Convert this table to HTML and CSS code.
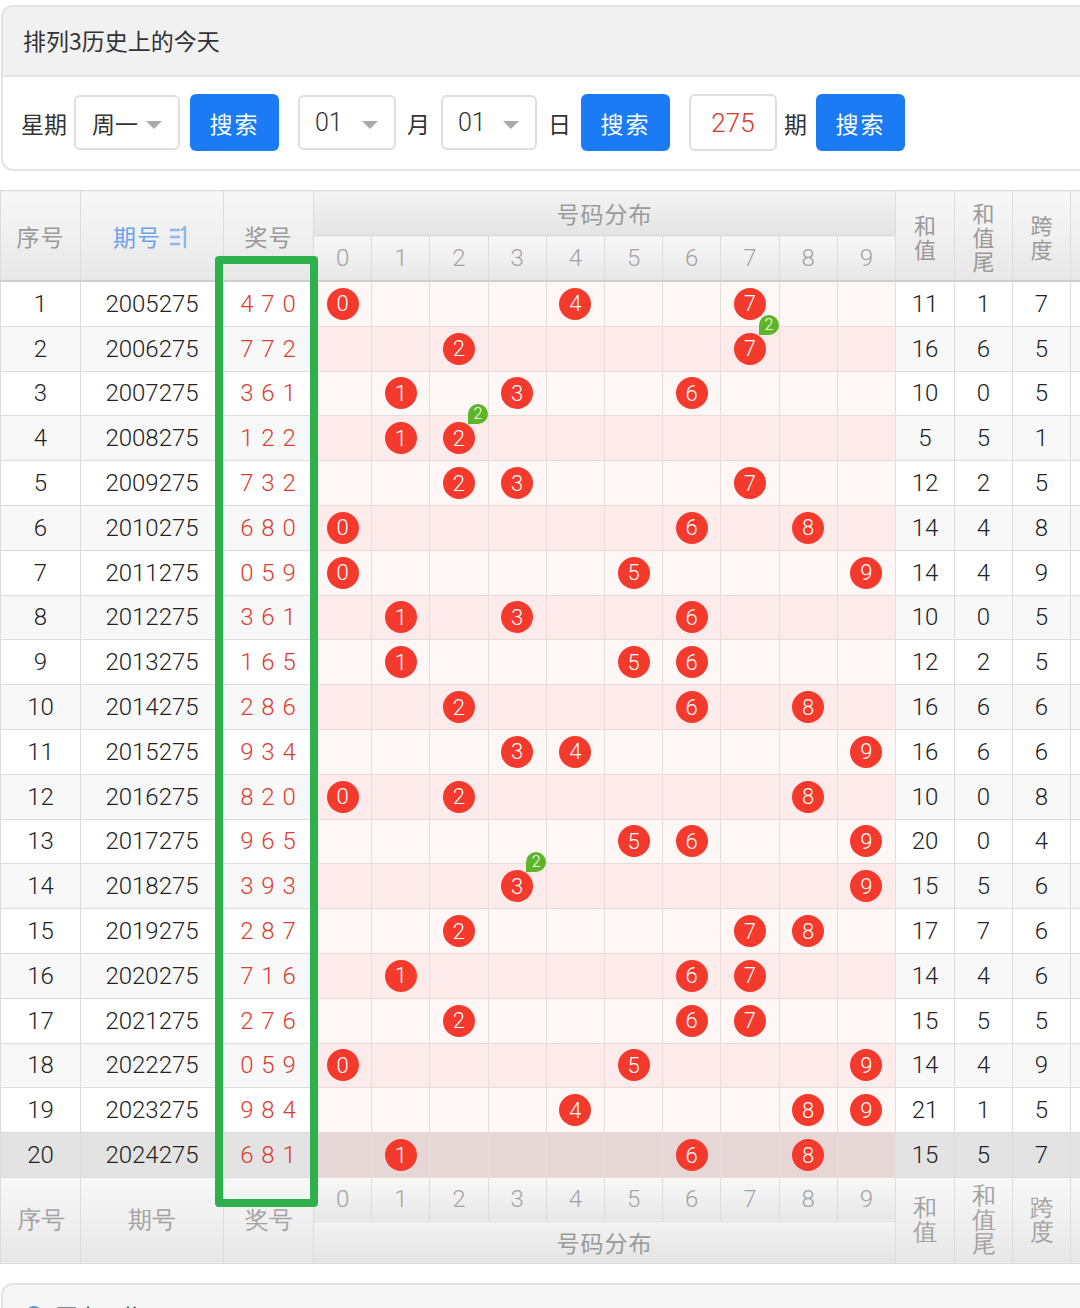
FILE: index.html
```html
<!DOCTYPE html>
<html lang="zh">
<head>
<meta charset="utf-8">
<title>排列3历史上的今天</title>
<link rel="stylesheet" href="styles.css">
</head>
<body>
<div class="page">
  <section class="card">
    <div class="card-head">排列3历史上的今天</div>
    <div class="card-body">
      <span class="lbl">星期</span>
      <span class="sel sel-week">周一<i class="caret"></i></span>
      <span class="btn">搜索</span>
      <span class="sel sel-num sel-month">01<i class="caret"></i></span>
      <span class="lbl lbl-mid">月</span>
      <span class="sel sel-num sel-day">01<i class="caret"></i></span>
      <span class="lbl lbl-mid lbl-end">日</span>
      <span class="btn">搜索</span>
      <span class="inp">275</span>
      <span class="lbl lbl-tight">期</span>
      <span class="btn btn-tight">搜索</span>
    </div>
  </section>

  <div class="table-wrap">
    <table class="trend">
      <colgroup>
        <col class="c-idx"><col class="c-issue"><col class="c-prize">
        <col class="c-d"><col class="c-d"><col class="c-d"><col class="c-d"><col class="c-d">
        <col class="c-d"><col class="c-d"><col class="c-d"><col class="c-d"><col class="c-d">
        <col class="c-sum"><col class="c-sum2"><col class="c-sum2"><col class="c-extra">
      </colgroup>
      <thead>
        <tr class="h1">
          <th rowspan="2">序号</th>
          <th rowspan="2" class="sortable">期号 <svg class="sort-ico" width="22" height="24" viewBox="0 0 22 24" aria-hidden="true"><path d="M1 5h10M1 12h10M1 19h10" stroke="#8cb8ef" stroke-width="2.4" fill="none"/><path d="M16 2v20M16 2l-3 3" stroke="#8cb8ef" stroke-width="2.4" fill="none" stroke-linecap="round"/></svg></th>
          <th rowspan="2">奖号</th>
          <th colspan="10" class="group">号码分布</th>
          <th rowspan="2" class="stack">和<br>值</th>
          <th rowspan="2" class="stack">和<br>值<br>尾</th>
          <th rowspan="2" class="stack">跨<br>度</th>
          <th rowspan="2"></th>
        </tr>
        <tr class="h2">
          <th>0</th><th>1</th><th>2</th><th>3</th><th>4</th><th>5</th><th>6</th><th>7</th><th>8</th><th>9</th>
        </tr>
      </thead>
      <tbody>
        <tr><td>1</td><td>2005275</td><td class="prize">4 7 0</td><td class="d"><span class="ball">0</span></td><td class="d"></td><td class="d"></td><td class="d"></td><td class="d"><span class="ball">4</span></td><td class="d"></td><td class="d"></td><td class="d"><span class="ball">7</span></td><td class="d"></td><td class="d"></td><td>11</td><td>1</td><td>7</td><td></td></tr>
        <tr><td>2</td><td>2006275</td><td class="prize">7 7 2</td><td class="d"></td><td class="d"></td><td class="d"><span class="ball">2</span></td><td class="d"></td><td class="d"></td><td class="d"></td><td class="d"></td><td class="d"><span class="ball">7<i class="badge">2</i></span></td><td class="d"></td><td class="d"></td><td>16</td><td>6</td><td>5</td><td></td></tr>
        <tr><td>3</td><td>2007275</td><td class="prize">3 6 1</td><td class="d"></td><td class="d"><span class="ball">1</span></td><td class="d"></td><td class="d"><span class="ball">3</span></td><td class="d"></td><td class="d"></td><td class="d"><span class="ball">6</span></td><td class="d"></td><td class="d"></td><td class="d"></td><td>10</td><td>0</td><td>5</td><td></td></tr>
        <tr><td>4</td><td>2008275</td><td class="prize">1 2 2</td><td class="d"></td><td class="d"><span class="ball">1</span></td><td class="d"><span class="ball">2<i class="badge">2</i></span></td><td class="d"></td><td class="d"></td><td class="d"></td><td class="d"></td><td class="d"></td><td class="d"></td><td class="d"></td><td>5</td><td>5</td><td>1</td><td></td></tr>
        <tr><td>5</td><td>2009275</td><td class="prize">7 3 2</td><td class="d"></td><td class="d"></td><td class="d"><span class="ball">2</span></td><td class="d"><span class="ball">3</span></td><td class="d"></td><td class="d"></td><td class="d"></td><td class="d"><span class="ball">7</span></td><td class="d"></td><td class="d"></td><td>12</td><td>2</td><td>5</td><td></td></tr>
        <tr><td>6</td><td>2010275</td><td class="prize">6 8 0</td><td class="d"><span class="ball">0</span></td><td class="d"></td><td class="d"></td><td class="d"></td><td class="d"></td><td class="d"></td><td class="d"><span class="ball">6</span></td><td class="d"></td><td class="d"><span class="ball">8</span></td><td class="d"></td><td>14</td><td>4</td><td>8</td><td></td></tr>
        <tr><td>7</td><td>2011275</td><td class="prize">0 5 9</td><td class="d"><span class="ball">0</span></td><td class="d"></td><td class="d"></td><td class="d"></td><td class="d"></td><td class="d"><span class="ball">5</span></td><td class="d"></td><td class="d"></td><td class="d"></td><td class="d"><span class="ball">9</span></td><td>14</td><td>4</td><td>9</td><td></td></tr>
        <tr><td>8</td><td>2012275</td><td class="prize">3 6 1</td><td class="d"></td><td class="d"><span class="ball">1</span></td><td class="d"></td><td class="d"><span class="ball">3</span></td><td class="d"></td><td class="d"></td><td class="d"><span class="ball">6</span></td><td class="d"></td><td class="d"></td><td class="d"></td><td>10</td><td>0</td><td>5</td><td></td></tr>
        <tr><td>9</td><td>2013275</td><td class="prize">1 6 5</td><td class="d"></td><td class="d"><span class="ball">1</span></td><td class="d"></td><td class="d"></td><td class="d"></td><td class="d"><span class="ball">5</span></td><td class="d"><span class="ball">6</span></td><td class="d"></td><td class="d"></td><td class="d"></td><td>12</td><td>2</td><td>5</td><td></td></tr>
        <tr><td>10</td><td>2014275</td><td class="prize">2 8 6</td><td class="d"></td><td class="d"></td><td class="d"><span class="ball">2</span></td><td class="d"></td><td class="d"></td><td class="d"></td><td class="d"><span class="ball">6</span></td><td class="d"></td><td class="d"><span class="ball">8</span></td><td class="d"></td><td>16</td><td>6</td><td>6</td><td></td></tr>
        <tr><td>11</td><td>2015275</td><td class="prize">9 3 4</td><td class="d"></td><td class="d"></td><td class="d"></td><td class="d"><span class="ball">3</span></td><td class="d"><span class="ball">4</span></td><td class="d"></td><td class="d"></td><td class="d"></td><td class="d"></td><td class="d"><span class="ball">9</span></td><td>16</td><td>6</td><td>6</td><td></td></tr>
        <tr><td>12</td><td>2016275</td><td class="prize">8 2 0</td><td class="d"><span class="ball">0</span></td><td class="d"></td><td class="d"><span class="ball">2</span></td><td class="d"></td><td class="d"></td><td class="d"></td><td class="d"></td><td class="d"></td><td class="d"><span class="ball">8</span></td><td class="d"></td><td>10</td><td>0</td><td>8</td><td></td></tr>
        <tr><td>13</td><td>2017275</td><td class="prize">9 6 5</td><td class="d"></td><td class="d"></td><td class="d"></td><td class="d"></td><td class="d"></td><td class="d"><span class="ball">5</span></td><td class="d"><span class="ball">6</span></td><td class="d"></td><td class="d"></td><td class="d"><span class="ball">9</span></td><td>20</td><td>0</td><td>4</td><td></td></tr>
        <tr><td>14</td><td>2018275</td><td class="prize">3 9 3</td><td class="d"></td><td class="d"></td><td class="d"></td><td class="d"><span class="ball">3<i class="badge">2</i></span></td><td class="d"></td><td class="d"></td><td class="d"></td><td class="d"></td><td class="d"></td><td class="d"><span class="ball">9</span></td><td>15</td><td>5</td><td>6</td><td></td></tr>
        <tr><td>15</td><td>2019275</td><td class="prize">2 8 7</td><td class="d"></td><td class="d"></td><td class="d"><span class="ball">2</span></td><td class="d"></td><td class="d"></td><td class="d"></td><td class="d"></td><td class="d"><span class="ball">7</span></td><td class="d"><span class="ball">8</span></td><td class="d"></td><td>17</td><td>7</td><td>6</td><td></td></tr>
        <tr><td>16</td><td>2020275</td><td class="prize">7 1 6</td><td class="d"></td><td class="d"><span class="ball">1</span></td><td class="d"></td><td class="d"></td><td class="d"></td><td class="d"></td><td class="d"><span class="ball">6</span></td><td class="d"><span class="ball">7</span></td><td class="d"></td><td class="d"></td><td>14</td><td>4</td><td>6</td><td></td></tr>
        <tr><td>17</td><td>2021275</td><td class="prize">2 7 6</td><td class="d"></td><td class="d"></td><td class="d"><span class="ball">2</span></td><td class="d"></td><td class="d"></td><td class="d"></td><td class="d"><span class="ball">6</span></td><td class="d"><span class="ball">7</span></td><td class="d"></td><td class="d"></td><td>15</td><td>5</td><td>5</td><td></td></tr>
        <tr><td>18</td><td>2022275</td><td class="prize">0 5 9</td><td class="d"><span class="ball">0</span></td><td class="d"></td><td class="d"></td><td class="d"></td><td class="d"></td><td class="d"><span class="ball">5</span></td><td class="d"></td><td class="d"></td><td class="d"></td><td class="d"><span class="ball">9</span></td><td>14</td><td>4</td><td>9</td><td></td></tr>
        <tr><td>19</td><td>2023275</td><td class="prize">9 8 4</td><td class="d"></td><td class="d"></td><td class="d"></td><td class="d"></td><td class="d"><span class="ball">4</span></td><td class="d"></td><td class="d"></td><td class="d"></td><td class="d"><span class="ball">8</span></td><td class="d"><span class="ball">9</span></td><td>21</td><td>1</td><td>5</td><td></td></tr>
        <tr class="current"><td>20</td><td>2024275</td><td class="prize">6 8 1</td><td class="d"></td><td class="d"><span class="ball">1</span></td><td class="d"></td><td class="d"></td><td class="d"></td><td class="d"></td><td class="d"><span class="ball">6</span></td><td class="d"></td><td class="d"><span class="ball">8</span></td><td class="d"></td><td>15</td><td>5</td><td>7</td><td></td></tr>
      </tbody>
      <tfoot>
        <tr class="f1">
          <th rowspan="2">序号</th>
          <th rowspan="2">期号</th>
          <th rowspan="2">奖号</th>
          <th>0</th><th>1</th><th>2</th><th>3</th><th>4</th><th>5</th><th>6</th><th>7</th><th>8</th><th>9</th>
          <th rowspan="2" class="stack">和<br>值</th>
          <th rowspan="2" class="stack">和<br>值<br>尾</th>
          <th rowspan="2" class="stack">跨<br>度</th>
          <th rowspan="2"></th>
        </tr>
        <tr class="f2">
          <th colspan="10" class="group">号码分布</th>
        </tr>
      </tfoot>
    </table>
    <div class="highlight-box"></div>
  </div>

  <section class="card card-next">
    <div class="next-head"><i class="next-ico"></i><span class="next-title">历史开奖</span></div>
  </section>
</div>
</body>
</html>
```

FILE: styles.css
```css
html, body {
  margin: 0;
  padding: 0;
  background: #fff;
  overflow: hidden;
}
body {
  font-family: "Noto Sans CJK SC", "Noto Sans", sans-serif;
  color: #333;
}
.page {
  width: 1140px;
  padding-top: 5px;
}

/* ---------- top card ---------- */
.card {
  margin-left: 1px;
  width: 1120px;
  border: 2px solid #e3e3e3;
  border-radius: 12px;
  overflow: hidden;
  background: #fff;
}
.card-head {
  background: #f1f1f1;
  border-bottom: 2px solid #e3e3e3;
  display: flex;
  align-items: center;
  padding-left: 20px;
  padding-bottom: 2px;
  box-sizing: border-box;
  height: 70px;
  font-size: 23px;
  color: #333;
}
.card-body {
  height: 92px;
  display: flex;
  align-items: center;
  padding-left: 18px;
  padding-bottom: 1px;
  box-sizing: border-box;
}
.lbl {
  font-size: 23px;
  color: #333;
  margin-right: 7px;
}
.lbl-mid { margin-left: 11px; margin-right: 11px; }
.lbl-end { margin-right: 0; }
.lbl-tight { margin-left: 7px; margin-right: 9px; }
.sel {
  height: 55px;
  box-sizing: border-box;
  border: 2px solid #dedede;
  border-radius: 6px;
  display: inline-flex;
  align-items: center;
  padding-left: 16px;
  font-size: 23px;
  color: #333;
  position: relative;
}
.sel-week { width: 106px; }
.sel-num {
  font-family: Roboto, "Noto Sans", sans-serif;
  font-weight: 300;
  font-size: 25px;
  padding-left: 15px;
}
.sel-month { width: 98px; margin-left: 19px; }
.sel-day { width: 96px; }
.caret {
  position: absolute;
  right: 16px;
  top: 24px;
  width: 0;
  height: 0;
  border-left: 8px solid transparent;
  border-right: 8px solid transparent;
  border-top: 8px solid #a9a9a9;
}
.btn {
  width: 89px;
  height: 57px;
  background: #1a7bf5;
  color: #fff;
  border-radius: 6px;
  display: inline-flex;
  align-items: center;
  justify-content: center;
  font-size: 23px;
  letter-spacing: 2px;
  margin-left: 10px;
}
.inp {
  margin-left: 19px;
  width: 88px;
  height: 57px;
  box-sizing: border-box;
  border: 2px solid #dedede;
  border-radius: 6px;
  display: inline-flex;
  align-items: center;
  justify-content: center;
  font-family: Roboto, "Noto Sans", sans-serif;
  font-weight: 300;
  font-size: 26px;
  color: #d9372d;
}
.btn-tight { margin-left: 0; }

/* ---------- table ---------- */
.table-wrap {
  position: relative;
  margin-top: 19px;
  width: 1140px;
}
.trend {
  border-collapse: collapse;
  table-layout: fixed;
  width: 1130px;
  font-family: Roboto, "Noto Sans", sans-serif;
  font-weight: 300;
}
.c-idx { width: 80px; }
.c-issue { width: 143px; }
.c-prize { width: 90px; }
.c-d { width: 58.2px; }
.c-sum { width: 59px; }
.c-sum2 { width: 58px; }
.c-extra { width: 60px; }

.trend th, .trend td {
  border: 1.5px solid #dcdcdc;
  padding: 0;
  text-align: center;
  vertical-align: middle;
}
.trend th {
  background: linear-gradient(#f8f8f8, #e7e7e7);
  color: #9a9a9a;
  font-weight: 400;
  font-family: "Noto Sans CJK SC", sans-serif;
  font-size: 23px;
  letter-spacing: 1px;
}
.trend thead .h1 th { height: 44px; }
.trend thead .h2 th { height: 44px; }
.trend thead .h2 th,
.trend tfoot .f1 th {
  font-family: Roboto, sans-serif;
  font-weight: 300;
  font-size: 24px;
  letter-spacing: 0;
  color: #a3a3a3;
}
.trend tfoot .f1 th { height: 43px; }
.trend thead .h2 th { border-bottom: 2px solid #cfcfcf; }
.trend thead .h1 th[rowspan] { border-bottom: 2px solid #cfcfcf; }
.trend tfoot .f2 th { height: 41px; }
.trend th.group { background: linear-gradient(#f3f3f3, #e4e4e4); }
.trend th.sortable { color: #6aa3ea; }
.sort-ico {
  vertical-align: -3px;
  margin-left: 2px;
}
.trend th.stack {
  font-size: 22px;
  line-height: 24px;
  letter-spacing: 0;
}

.trend tbody td {
  height: 43.8px;
  font-size: 24px;
  color: #222;
  background: #fff;
}
.trend tbody tr:nth-child(even) td { background: #f8f8f8; }
.trend tbody td.d { background: #fff6f6; border-color: #e6dcdc; position: relative; }
.trend tbody tr:nth-child(even) td.d { background: #fdeaea; }
.trend tbody tr.current td { background: #e3e3e3; }
.trend tbody tr.current td.d { background: #e6d6d6; }
.trend td.prize {
  color: #dc3c32;
  letter-spacing: 1px;
  font-size: 24px;
}

.ball {
  display: inline-flex;
  align-items: center;
  justify-content: center;
  width: 32px;
  height: 32px;
  border-radius: 50%;
  background: #f33a2c;
  color: #fff;
  font-size: 22px;
  font-weight: 300;
  position: relative;
  vertical-align: middle;
}
.badge {
  position: absolute;
  left: 25px;
  top: -18px;
  width: 20px;
  height: 20px;
  border-radius: 50% 50% 50% 0;
  background: #5fb52a;
  color: #fff;
  font-style: normal;
  font-size: 16px;
  line-height: 20px;
  text-align: center;
  z-index: 2;
}

.highlight-box {
  position: absolute;
  left: 215px;
  top: 66px;
  width: 103px;
  height: 951px;
  box-sizing: border-box;
  border: 8px solid #2eb04a;
  border-radius: 4px;
  z-index: 3;
  pointer-events: none;
}

/* ---------- next card ---------- */
.card-next {
  margin-top: 19px;
  background: #f6f6f6;
  height: 60px;
}
.next-head {
  display: flex;
  align-items: center;
  padding: 14px 0 0 22px;
  gap: 12px;
}
.next-ico {
  width: 18px;
  height: 18px;
  border-radius: 50%;
  background: #4a90e2;
}
.next-title {
  font-size: 22px;
  color: #333;
}
```
